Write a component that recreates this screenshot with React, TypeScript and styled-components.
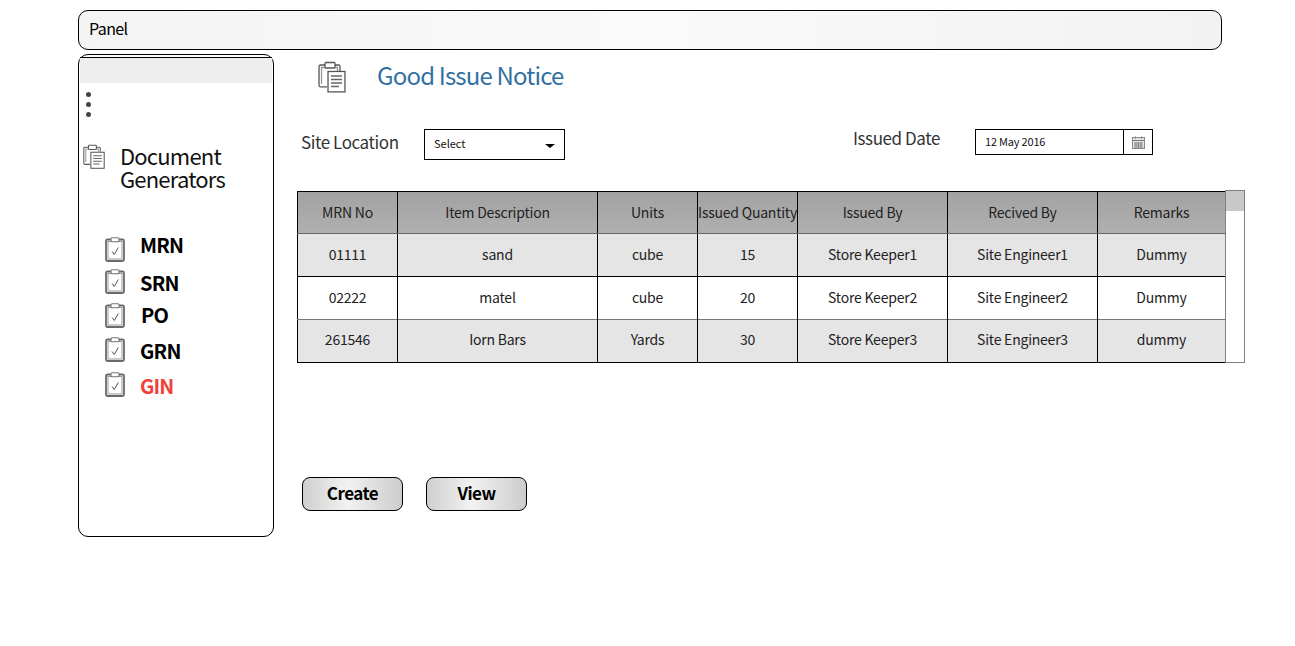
import React from "react";
import styled, { createGlobalStyle } from "styled-components";

const Global = createGlobalStyle`
  html, body { margin: 0; padding: 0; background: #fff; }
  body { font-family: "Noto Sans CJK JP", "Noto Sans", sans-serif; color: #000; }
  * { box-sizing: border-box; }
`;

const Page = styled.div`
  width: 1295px;
  height: 646px;
  padding: 10px 0 0 78px;
  overflow: hidden;
`;

const TopPanel = styled.div`
  width: 1144px;
  height: 40px;
  border: 1px solid #000;
  border-radius: 10px;
  padding: 0 0 5px 10px;
  display: flex;
  align-items: center;
  font-size: 16px;
  letter-spacing: -0.6px;
  background: linear-gradient(90deg, #f4f4f4 0%, #fafafa 50%, #f2f2f2 100%);
`;

const Body = styled.div`
  display: flex;
  margin-top: 4px;
`;

const Sidebar = styled.aside`
  width: 196px;
  height: 483px;
  border: 1px solid #000;
  border-radius: 10px;
  padding: 2px 1px 0;
  flex: none;
`;

const SideHeader = styled.div`
  height: 26px;
  margin: 0;
  background: #eeeeee;
  border-top: 1px solid #000;
`;

const Dots = styled.div`
  display: flex;
  flex-direction: column;
  gap: 5px;
  margin: 9px 0 0 6px;
`;

const Dot = styled.span`
  width: 5px;
  height: 5px;
  border-radius: 50%;
  background: #444;
`;

const SideTitleRow = styled.div`
  display: flex;
  margin: 27px 0 0 3px;
  height: 48px;
`;

const SideTitle = styled.div`
  margin-left: 15px;
  font-size: 22px;
  line-height: 23px;
  letter-spacing: -0.8px;
  color: #111;
`;

const NavList = styled.ul`
  list-style: none;
  margin: 45px 0 0 25px;
  padding: 0;
`;

const NavItem = styled.li<{ $h: number }>`
  display: flex;
  height: ${(p) => p.$h}px;
  align-items: flex-start;
`;

const NavLabel = styled.span<{ $active?: boolean; $x?: number; $y: number }>`
  margin: ${(p) => p.$y}px 0 0 ${(p) => p.$x ?? 15}px;
  font-size: 20px;
  line-height: 26px;
  font-weight: 700;
  letter-spacing: -0.8px;
  color: ${(p) => (p.$active ? "#f0403a" : "#000")};
`;

const Main = styled.main`
  flex: none;
  width: 970px;
  padding: 0 0 0 23px;
`;

const TitleRow = styled.div`
  display: flex;
  align-items: flex-start;
  height: 75px;
  padding: 7px 0 0 21px;
`;

const PageTitle = styled.h1`
  margin: -2px 0 0 31px;
  font-size: 24px;
  line-height: 32px;
  font-weight: 400;
  letter-spacing: -0.83px;
  color: #33709f;
`;

const FormRow = styled.div`
  display: flex;
  height: 61px;
  align-items: flex-start;
`;

const FieldLabel = styled.label<{ $w: number; $y: number; $x: number }>`
  width: ${(p) => p.$w}px;
  margin: ${(p) => p.$y}px 0 0 ${(p) => p.$x}px;
  font-size: 17px;
  line-height: 24px;
  letter-spacing: -0.42px;
  color: #333;
`;

const SelectBox = styled.div`
  width: 141px;
  height: 31px;
  border: 1px solid #000;
  display: flex;
  align-items: center;
  justify-content: space-between;
  padding: 0 9px 3px;
  font-size: 11px;
  color: #111;
`;

const Caret = styled.span`
  width: 0;
  height: 0;
  margin-top: 6px;
  border-left: 5px solid transparent;
  border-right: 5px solid transparent;
  border-top: 4px solid #000;
`;

const Spacer = styled.div<{ $w: number }>`
  flex: none;
  width: ${(p) => p.$w}px;
`;

const DateBox = styled.div`
  width: 178px;
  height: 26px;
  border: 1px solid #000;
  display: flex;
  font-size: 11px;
  letter-spacing: -0.2px;
  color: #111;
`;

const DateText = styled.div`
  flex: 1;
  display: flex;
  align-items: center;
  padding: 0 0 2px 9px;
`;

const DateButton = styled.div`
  width: 29px;
  border-left: 1px solid #000;
  display: flex;
  align-items: center;
  justify-content: center;
`;

const TableWrap = styled.div`
  display: flex;
  align-items: flex-start;
`;

const Table = styled.table`
  width: 928px;
  border-collapse: collapse;
  table-layout: fixed;
  margin-top: 1px;
  border: 1px solid #000;
  font-size: 14px;
  letter-spacing: -0.22px;
  color: #222;
  text-align: center;
`;

const Th = styled.th`
  height: 42px;
  padding: 0 0 2px;
  font-weight: 400;
  white-space: nowrap;
  border-right: 1px solid #000;
  border-bottom: 1px solid #666;
  color: #222;
`;

const HeadRow = styled.tr`
  background: linear-gradient(180deg, #a2a2a2 0%, #b0b0b0 100%);
`;

const Row = styled.tr<{ $shade: boolean; $h: number; $line: string }>`
  height: ${(p) => p.$h}px;
  background: ${(p) => (p.$shade ? "#e5e5e5" : "#fff")};
  border-bottom: 1px solid ${(p) => p.$line};
`;

const Td = styled.td<{ $lift: number }>`
  padding: 0 0 ${(p) => p.$lift}px;
  border-right: 1px solid #000;
`;

const Scrollbar = styled.div`
  position: relative;
  width: 20px;
  height: 173px;
  margin-left: -1px;
  background: #fff;
  border: 1px solid #808080;
  flex: none;
`;

const Thumb = styled.div`
  height: 20px;
  background: #c8c8c8;
`;

const Buttons = styled.div`
  display: flex;
  gap: 23px;
  margin: 114px 0 0 5px;
`;

const Button = styled.button`
  width: 101px;
  height: 34px;
  padding: 0 0 3px;
  border: 1px solid #000;
  border-radius: 8px;
  font-family: inherit;
  font-size: 17px;
  font-weight: 700;
  letter-spacing: -0.5px;
  color: #000;
  background: linear-gradient(90deg, #cfcfcf 0%, #f2f2f2 45%, #cccccc 100%);
`;

const ClipStack = ({ size }: { size: number }) => (
  <svg width={size} height={size * 1.14} viewBox="0 0 28 32" fill="none" stroke="#555" strokeWidth="1.3">
    <path d="M7 4H2.500a1.500 1.500 0 0 0-1.500 1.500V24.500a1.500 1.500 0 0 0 1.500 1.500H9" />
    <path d="M17 4h3.500A1.500 1.500 0 0 1 22 5.500V10" />
    <path d="M3.500 23V6.500H7M17 6.500h2.500V10" stroke="#999" />
    <rect x="7" y="1.500" width="10" height="5.500" rx="1" />
    <rect x="10" y="10.500" width="17" height="20.500" fill="#fff" />
    <path d="M13 15h11M13 18.500h11M13 22h11M13 25.500h8" strokeWidth="1.500" stroke="#666" />
  </svg>
);

const ClipCheck = () => (
  <svg width="20" height="25" viewBox="0 0 20 25" fill="none">
    <rect x="1" y="2.500" width="18" height="21.500" rx="1.500" stroke="#6a6a6a" strokeWidth="1.800" />
    <rect x="3" y="4.500" width="14" height="17.500" stroke="#999" strokeWidth="1" />
    <rect x="6" y="0.700" width="8" height="4" rx="1" fill="#fff" stroke="#777" strokeWidth="1.100" />
    <path d="M7 14.500l2.300 3 4-7" stroke="#555" strokeWidth="1" />
  </svg>
);

const CalendarIcon = () => (
  <svg width="13" height="13" viewBox="0 0 13 13" fill="none">
    <rect x="0.500" y="1.500" width="12" height="11" fill="#e4e4e4" stroke="#888" />
    <path d="M1 4.500h11" stroke="#777" />
    <path d="M3.500 0.500v2M9.500 0.500v2" stroke="#777" />
    <path d="M2 7h9M2 9h9M2 11h9M4 6v6M6.500 6v6M9 6v6" stroke="#777" strokeWidth="0.800" />
  </svg>
);

const nav: { label: string; h: number; y: number; x?: number; active?: boolean }[] = [
  { label: "MRN", h: 32, y: -5 },
  { label: "SRN", h: 34, y: 1 },
  { label: "PO", h: 34, y: -1, x: 16 },
  { label: "GRN", h: 35, y: 1 },
  { label: "GIN", h: 35, y: 1 },
];
nav[4].active = true;

const columns = [100, 200, 100, 100, 150, 150, 128];
const headers = ["MRN No", "Item Description", "Units", "Issued Quantity", "Issued By", "Recived By", "Remarks"];
const rows: { cells: string[]; shade: boolean; h: number; line: string; lift: number }[] = [
  { cells: ["01111", "sand", "cube", "15", "Store Keeper1", "Site Engineer1", "Dummy"], shade: true, h: 43, line: "#000", lift: 3 },
  { cells: ["02222", "matel", "cube", "20", "Store Keeper2", "Site Engineer2", "Dummy"], shade: false, h: 43, line: "#777", lift: 3 },
  { cells: ["261546", "Iorn Bars", "Yards", "30", "Store Keeper3", "Site Engineer3", "dummy"], shade: true, h: 43, line: "#000", lift: 5 },
];

export default function App() {
  return (
    <Page>
      <Global />
      <TopPanel>Panel</TopPanel>
      <Body>
        <Sidebar>
          <SideHeader />
          <Dots>
            <Dot />
            <Dot />
            <Dot />
          </Dots>
          <SideTitleRow>
            <ClipStack size={22} />
            <SideTitle>
              Document
              <br />
              Generators
            </SideTitle>
          </SideTitleRow>
          <NavList>
            {nav.map((n) => (
              <NavItem key={n.label} $h={n.h}>
                <ClipCheck />
                <NavLabel $active={n.active} $x={n.x} $y={n.y}>
                  {n.label}
                </NavLabel>
              </NavItem>
            ))}
          </NavList>
        </Sidebar>
        <Main>
          <TitleRow>
            <ClipStack size={28} />
            <PageTitle>Good Issue Notice</PageTitle>
          </TitleRow>
          <FormRow>
            <FieldLabel $w={123} $y={1} $x={4}>
              Site Location
            </FieldLabel>
            <SelectBox>
              Select
              <Caret />
            </SelectBox>
            <Spacer $w={288} />
            <FieldLabel $w={122} $y={-3} $x={0}>
              Issued Date
            </FieldLabel>
            <DateBox>
              <DateText>12 May 2016</DateText>
              <DateButton>
                <CalendarIcon />
              </DateButton>
            </DateBox>
          </FormRow>
          <TableWrap>
            <Table>
              <colgroup>
                {columns.map((w, i) => (
                  <col key={i} style={{ width: w }} />
                ))}
              </colgroup>
              <thead>
                <HeadRow>
                  {headers.map((h) => (
                    <Th key={h}>{h}</Th>
                  ))}
                </HeadRow>
              </thead>
              <tbody>
                {rows.map((r) => (
                  <Row key={r.cells[0]} $shade={r.shade} $h={r.h} $line={r.line}>
                    {r.cells.map((c, i) => (
                      <Td key={i} $lift={r.lift}>
                        {c}
                      </Td>
                    ))}
                  </Row>
                ))}
              </tbody>
            </Table>
            <Scrollbar>
              <Thumb />
            </Scrollbar>
          </TableWrap>
          <Buttons>
            <Button>Create</Button>
            <Button>View</Button>
          </Buttons>
        </Main>
      </Body>
    </Page>
  );
}
